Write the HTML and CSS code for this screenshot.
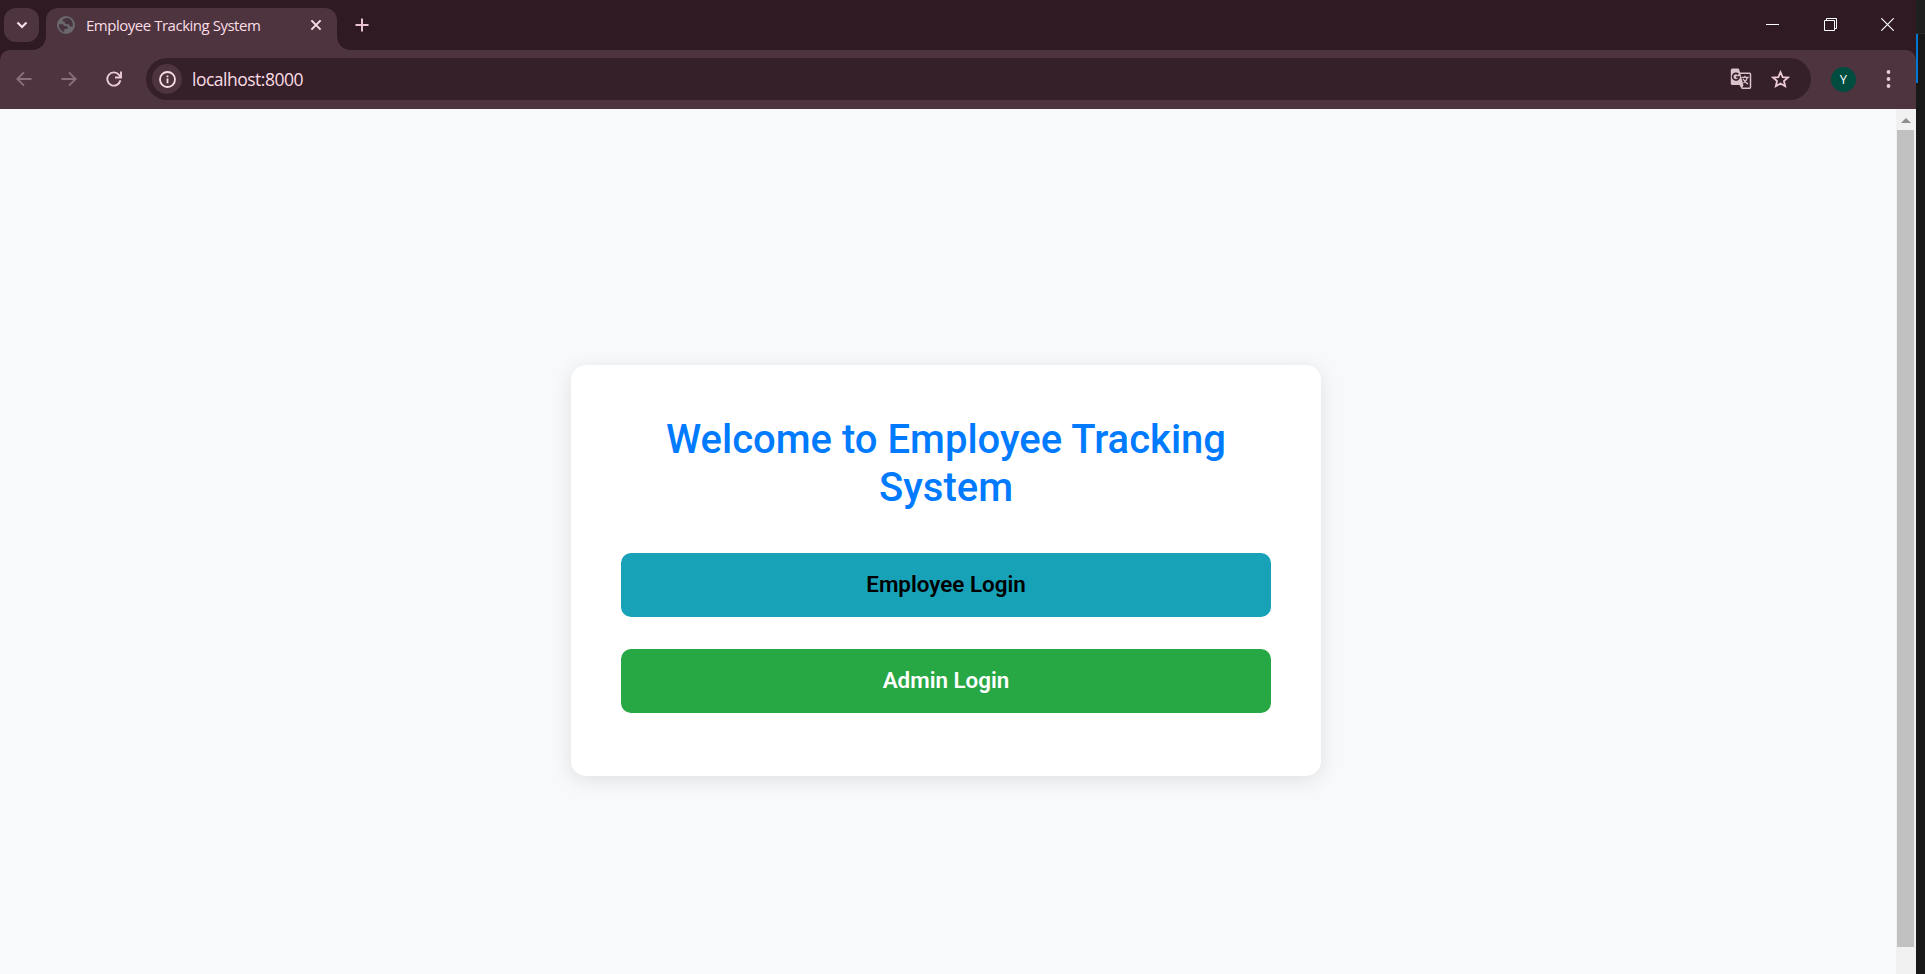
FILE: index.html
```html
<!DOCTYPE html>
<html lang="en">
<head>
<meta charset="utf-8">
<title>Employee Tracking System</title>
<link rel="stylesheet" href="styles.css">
</head>
<body>
<div class="desktop">
  <div class="window">
    <header class="tabstrip">
      <button class="tab-search" aria-label="Search tabs"><svg width="12" height="8" viewBox="0 0 12 8"><path d="M1.500 1.500 6 6l4.500-4.500" fill="none" stroke="#fbdde6" stroke-width="2.200"/></svg></button>
      <div class="tab">
        <svg class="globe" width="18" height="18" viewBox="0 0 18 18"><circle cx="9" cy="9" r="9" fill="#6a686d"/><path d="M11 2.100c-2.200-.2-4.600.6-5.300 1.700-.5 1 .2 1.600 1.200 1.700 1 0 1 .8 1 1.500.1.900.8 1.200 1.700 1.200h1.600c1 0 1.200.5 1.300 1.300.2.800.8 1.100 1.700 1.100h1.500c.7-3.600-1.200-7.400-4.700-8.500zM2 8.200c-.5 3.600 1.800 6.900 5.200 7.700v-1.700c0-.8.500-1.300 1.300-1.300h.8c1 0 1.500-.7 1.500-1.500 0-1-.6-1.500-1.500-1.500H7.600c-.8 0-1-.3-1-.8 0-.6-.4-.9-1-.9z" fill="#47343e"/></svg>
        <span class="tab-title">Employee Tracking System</span>
        <svg class="tab-close" width="12" height="12" viewBox="0 0 12 12"><path d="m1.400 1.400 9.200 9.200m0-9.200-9.200 9.200" fill="none" stroke="#fbdde6" stroke-width="2"/></svg>
      </div>
      <svg class="new-tab" width="14" height="14" viewBox="0 0 14 14"><path d="M7 .5v13M.5 7h13" fill="none" stroke="#e9c3d0" stroke-width="2"/></svg>
      <div class="window-controls">
        <svg width="13" height="13" viewBox="0 0 13 13"><path d="M0 6.500h13" stroke="#fff"/></svg>
        <svg width="13" height="13" viewBox="0 0 13 13"><path d="M.5 2.500h10v10H.5zM2.500 2.500v-2h10v10h-2" fill="none" stroke="#fff"/></svg>
        <svg width="13" height="13" viewBox="0 0 13 13"><path d="m.3.300 12.400 12.400m0-12.400L.3 12.700" fill="none" stroke="#fff" stroke-width="1.150"/></svg>
      </div>
    </header>
    <nav class="toolbar">
      <div class="nav-icons">
        <svg width="16" height="16" viewBox="0 0 16 16"><path d="M15.500 8H1.700M8 1.300 1.300 8 8 14.700" fill="none" stroke="#8a707b" stroke-width="1.900"/></svg>
        <svg width="16" height="16" viewBox="0 0 16 16"><path d="M.5 8h13.800M8 1.300 14.700 8 8 14.700" fill="none" stroke="#8a707b" stroke-width="1.900"/></svg>
        <svg width="16" height="16" viewBox="0 0 16 16"><path d="M14.400 9.300A6.600 6.600 0 1 1 13 3.800l1.600 1.800M15 .5v6H9" fill="none" stroke="#ebcbd6" stroke-width="1.900"/></svg>
      </div>
      <div class="omnibox">
        <span class="site-info"><svg width="17" height="17" viewBox="0 0 17 17"><circle cx="8.500" cy="8.500" r="7.500" fill="none" stroke="#fbdde6" stroke-width="1.800"/><path d="M8.500 7.600v4.700M8.500 4.400v1.800" stroke="#fbdde6" stroke-width="1.800"/></svg></span>
        <span class="url">localhost:8000</span>
        <svg class="translate" width="22" height="22" viewBox="0 0 22 22"><path d="M10 5.300h9.500q1 0 1 1v12.900q0 1-1 1H12" fill="none" stroke="#dcc3cb" stroke-width="1.500"/><path d="M2.300.5h5.500q1.200 0 1.500 1.200L13.400 17H2.300Q.8 17 .8 15.500V2Q.8.500 2.300.500zM9.500 17h4l-1.800 4z" fill="#dcc3cb"/><path d="M8.300 6.400A3.300 3.300 0 1 0 9.200 9H6" fill="none" stroke="#351f28" stroke-width="1.700"/><path d="M11.500 9.300h7.300M14.900 7.700v1.600M17.400 9.500c-.6 2.300-2 4.100-3.900 5.500M13 10.800c.9 1.900 2.500 3.700 4.900 5.300" fill="none" stroke="#dcc3cb" stroke-width="1.300"/></svg>
        <svg class="star" width="19" height="19" viewBox="0 0 19 19"><path d="m9.500 2.200 2.150 4.850 5.250.5-3.950 3.450 1.200 5.200L9.500 13.500l-4.650 2.700 1.200-5.200L2.100 7.550l5.250-.5z" fill="none" stroke="#ebcbd6" stroke-width="1.800"/></svg>
      </div>
      <span class="avatar">Y</span>
      <svg class="menu" width="5" height="18" viewBox="0 0 5 18"><g fill="#ebcbd6"><circle cx="2.500" cy="2" r="1.900"/><circle cx="2.500" cy="9" r="1.900"/><circle cx="2.500" cy="16" r="1.900"/></g></svg>
    </nav>
    <div class="viewport">
      <main class="page">
        <section class="card">
          <h1 class="title">Welcome to Employee Tracking System</h1>
          <a class="login employee">Employee Login</a>
          <a class="login admin">Admin Login</a>
        </section>
      </main>
      <div class="scrollbar">
        <svg class="scroll-up" width="10" height="5" viewBox="0 0 10 5"><path d="m0 5 5-5 5 5z" fill="#8e8e8e"/></svg>
        <div class="thumb"></div>
      </div>
    </div>
  </div>
  <aside class="backdrop"><div class="backdrop-top"></div><div class="backdrop-accent"></div></aside>
</div>
</body>
</html>
```
FILE: styles.css
```css
* { box-sizing: border-box; }
body { margin: 0; overflow: hidden; font-family: Roboto, sans-serif; }
svg { display: block; flex: none; }
.desktop { display: flex; width: 1925px; height: 974px; background: #181818; }
.window { width: 1916px; display: flex; flex-direction: column; background: #2f1a23; }

/* Tab strip */
.tabstrip { display: flex; align-items: center; height: 50px; background: #2f1a23; }
.tab-search { display: flex; align-items: center; justify-content: center; width: 35px; height: 34px; margin-left: 4px; padding: 0; border: 0; border-radius: 12px; background: #4e343f; }
.tab { position: relative; display: flex; align-items: center; align-self: flex-end; width: 291px; height: 42px; margin-left: 7px; padding: 0 15px 8px 11px; border-radius: 12px 12px 0 0; background: #4e343f; }
.tab::before, .tab::after { content: ""; position: absolute; bottom: 0; width: 13px; height: 13px; }
.tab::before { right: 100%; background: radial-gradient(circle at 0 0, transparent 12.500px, #4e343f 13px); }
.tab::after { left: 100%; background: radial-gradient(circle at 100% 0, transparent 12.500px, #4e343f 13px); }
.tab-title { margin-left: 11px; font: 15px/20px "Open Sans", sans-serif; letter-spacing: -0.48px; color: #fbdde6; white-space: nowrap; }
.tab-close { margin-left: auto; }
.new-tab { margin-left: 18px; }
.window-controls { display: flex; gap: 44.500px; margin: 0 22px 1px auto; }

/* Toolbar */
.toolbar { display: flex; align-items: center; height: 59px; padding: 0 0 1px 16px; border-radius: 10px 10px 0 0; background: #4e343f; }
.nav-icons { display: flex; gap: 29px; }
.omnibox { display: flex; align-items: center; width: 1665px; height: 42px; margin-left: 24px; padding: 0 21px 0 6px; border-radius: 21px; background: #351f28; }
.site-info { display: flex; align-items: center; justify-content: center; width: 30px; height: 30px; border-radius: 50%; background: #4e343f; }
.url { margin-left: 10px; font: 17.500px/24px "Open Sans", sans-serif; letter-spacing: -0.5px; color: #fbdde6; }
.translate { margin-left: auto; }
.star { margin-left: 19px; }
.avatar { width: 25px; height: 25px; margin-left: 20px; border-radius: 50%; background: #004d40; color: #fff; font: 13px/25px "Open Sans", sans-serif; text-align: center; }
.menu { margin-left: 30px; }

/* Page */
.viewport { display: flex; flex: 1; background: #f8f9fb; }
.page { flex: none; width: 1892px; padding-top: 256px; }
.card { width: 750px; height: 411px; margin: 0 auto; padding: 51px 50px 50px; border-radius: 15px; background: #fff; box-shadow: 0 4px 20px rgba(0, 0, 0, .1); }
.title { margin: 0 0 41px; font-size: 40px; font-weight: 500; line-height: 48px; text-align: center; color: #007bff; }
.login { display: block; height: 64px; margin-bottom: 32px; border-radius: 10px; font-size: 22.400px; font-weight: 600; line-height: 63px; text-align: center; }
.employee { background: #17a2b8; color: #000; }
.admin { background: #28a745; color: #fff; }
.scrollbar { width: 20px; margin-left: 4px; padding: 9px 2px 0 1px; background: #f1f1f1; }
.scroll-up { margin: 0 auto 7px 4px; }
.thumb { height: 817px; background: #c1c1c1; }

/* Strip of the desktop beside the window */
.backdrop { width: 9px; background: #181818; }
.backdrop-top { height: 34px; background: #1f1f1f; border-bottom: 1px solid #2b2b2b; }
.backdrop-accent { width: 2px; height: 49px; background: #0078d4; }
```
